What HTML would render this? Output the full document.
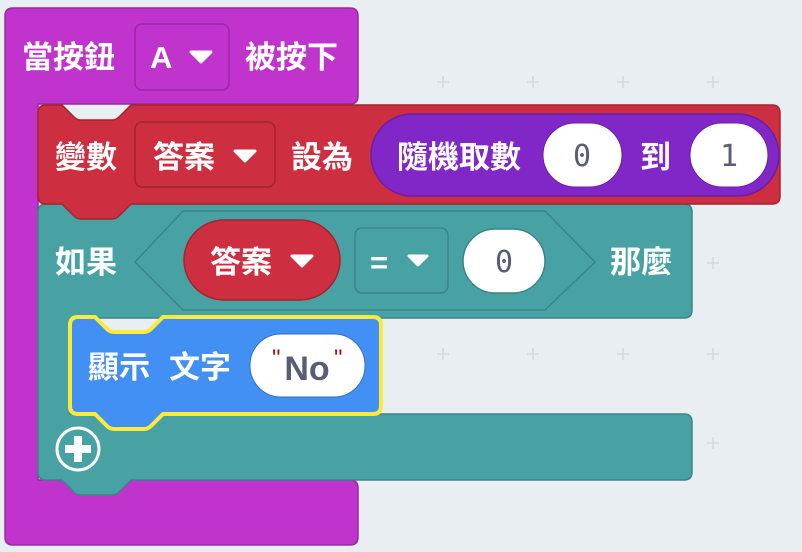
<!DOCTYPE html>
<html><head><meta charset="utf-8"><style>
html,body{margin:0;padding:0;background:#e9eef2;width:802px;height:552px;overflow:hidden}
svg{display:block}
text{font-family:"Liberation Sans","Noto Sans CJK TC",sans-serif;font-weight:bold;font-size:31px;fill:#fff}
.n{font-family:"DejaVu Sans Mono","Liberation Mono",monospace;fill:#575e75;font-size:30px;font-weight:normal}
</style></head><body>
<svg width="802" height="552" viewBox="0 0 802 552">
<g stroke="#d4d9de" stroke-width="1.5">
<path d="M437,82h12M443,76v12M527,82h12M533,76v12M617,82h12M623,76v12M707,82h12M713,76v12"/>
<path d="M707,263h12M713,257v12"/>
<path d="M437,354h12M443,348v12M527,354h12M533,348v12M617,354h12M623,348v12M707,354h12M713,348v12"/>
<path d="M437,443h12M443,437v12M527,443h12M533,437v12M617,443h12M623,437v12M707,443h12M713,437v12"/>
</g>
<path d="M13,8H350q8,0 8,8V96q0,8 -8,8H38V480H350q8,0 8,8V537q0,8 -8,8H13q-8,0 -8,-8V16q0,-8 8,-8Z" fill="#c033cc" stroke="#9a28a5" stroke-width="1.5"/>
<rect x="135" y="24" width="94" height="66" rx="7" fill="#c033cc" stroke="#9a28a5" stroke-width="1.5"/>
<text x="22" y="68">當按鈕</text>
<text x="150" y="68" style="font-family:'Liberation Sans',sans-serif">A</text>
<path d="M191,52h20l-10,10z" fill="#fff" stroke="#fff" stroke-width="3" stroke-linejoin="round"/>
<text x="245" y="68">被按下</text>
<path d="M46,204H684q8,0 8,8V310q0,8 -8,8H70V414H684q8,0 8,8V472q0,8 -8,8H131l-12,12q-3,3 -7,3H81q-4,0 -7,-3l-12,-12H46q-8,0 -8,-8V212q0,-8 8,-8Z" fill="#48a2a4" stroke="#3a8587" stroke-width="1.5"/>
<polygon points="135,262 183,211 545,211 595,262 545,310 183,310" fill="#48a2a4" stroke="#3a8587" stroke-width="1.5"/>
<text x="55" y="273">如果</text>
<rect x="184" y="220" width="156" height="80" rx="40" fill="#cd2f40" stroke="#a3232f" stroke-width="1.5"/>
<text x="210" y="273">答案</text>
<path d="M292,256h20l-10,10z" fill="#fff" stroke="#fff" stroke-width="3" stroke-linejoin="round"/>
<rect x="355" y="228" width="93" height="65" rx="7" fill="#48a2a4" stroke="#3a8587" stroke-width="1.5"/>
<text x="370" y="273" style="font-family:'Liberation Sans',sans-serif">=</text>
<path d="M409,256h18l-9,9z" fill="#fff" stroke="#fff" stroke-width="3" stroke-linejoin="round"/>
<rect x="463" y="229" width="82" height="64" rx="32" fill="#fff" stroke="#3a8587" stroke-width="1.5"/>
<text class="n" x="504" y="272" text-anchor="middle">0</text>
<text x="610" y="273">那麼</text>
<circle cx="78" cy="449" r="21" fill="none" stroke="#fff" stroke-width="3"/>
<path d="M78,436v26M65,449h26" stroke="#fff" stroke-width="8"/>
<path d="M46,105H62l12,12q3,3 7,3H112q4,0 7,-3l12,-12H772q8,0 8,8V196q0,8 -8,8H131l-12,12q-3,3 -7,3H81q-4,0 -7,-3l-12,-12H46q-8,0 -8,-8V113q0,-8 8,-8Z" fill="#cd2f40" stroke="#a3232f" stroke-width="1.5"/>
<rect x="135" y="122" width="140" height="65" rx="7" fill="#cd2f40" stroke="#a3232f" stroke-width="1.5"/>
<text x="55" y="168">變數</text>
<text x="153" y="168">答案</text>
<path d="M235,151h20l-10,10z" fill="#fff" stroke="#fff" stroke-width="3" stroke-linejoin="round"/>
<text x="291" y="168">設為</text>
<rect x="371" y="114" width="408" height="82" rx="41" fill="#8127c8" stroke="#6a1fa6" stroke-width="1.5"/>
<text x="397" y="168">隨機取數</text>
<rect x="543" y="123" width="79" height="64" rx="32" fill="#fff" stroke="#6a1fa6" stroke-width="1"/>
<text class="n" x="582" y="166" text-anchor="middle">0</text>
<text x="640" y="168">到</text>
<rect x="690" y="123" width="78" height="64" rx="32" fill="#fff" stroke="#6a1fa6" stroke-width="1"/>
<text class="n" x="729" y="166" text-anchor="middle">1</text>
<path d="M78,317H95l12,12q3,3 7,3H144q4,0 7,-3l12,-12H373q8,0 8,8V406q0,8 -8,8H163l-12,12q-3,3 -7,3H114q-4,0 -7,-3l-12,-12H78q-8,0 -8,-8V325q0,-8 8,-8Z" fill="#4390f5" stroke="#fcea3a" stroke-width="4" stroke-linejoin="round"/>
<text x="88" y="378">顯示</text>
<text x="169" y="378">文字</text>
<rect x="250" y="334" width="115" height="63" rx="31" fill="#fff" stroke="#2f6fc4" stroke-width="1"/>
<text x="307" y="380" text-anchor="middle" style="fill:#575e75;font-weight:bold;font-size:34px">No</text>
<text x="272" y="366" style="fill:#a31515;font-size:24px;font-weight:normal">"</text>
<text x="334" y="366" style="fill:#a31515;font-size:24px;font-weight:normal">"</text>
</svg>
</body></html>
